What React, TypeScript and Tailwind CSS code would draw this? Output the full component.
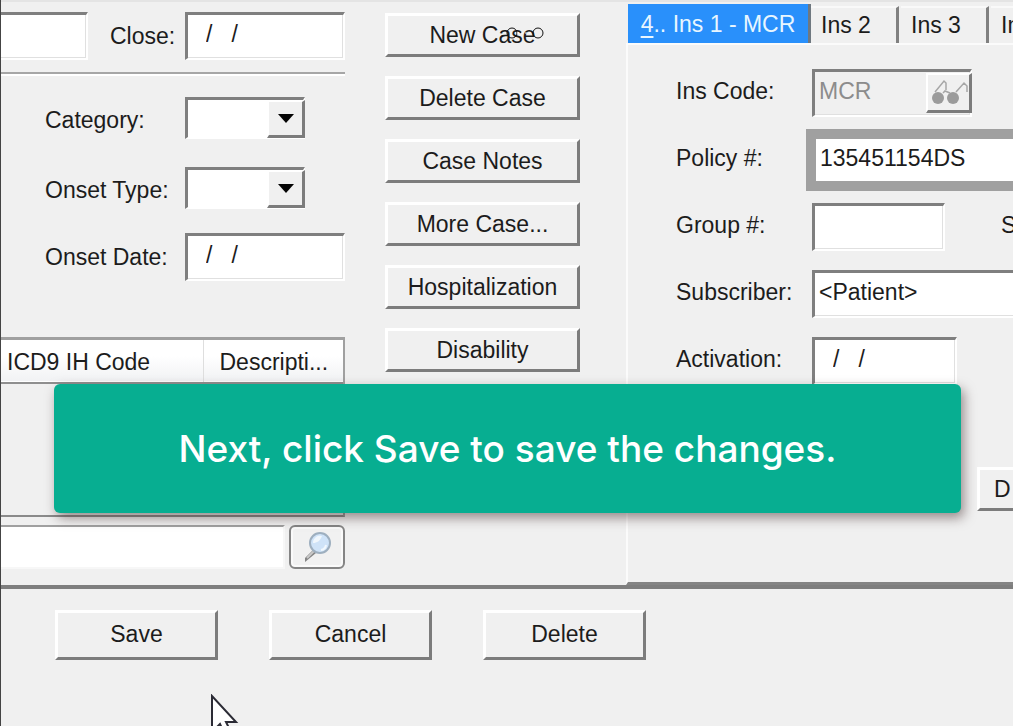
import React from "react";
import clsx from "clsx";

const FIELD =
  "h-12 min-w-0 border-t-3 border-r-2 border-b-2 border-t-[#7f7f7f] border-l-[#7f7f7f] border-r-white border-b-white pb-1 shadow-[inset_-1px_-1px_0_#e0e0e0] outline-none";

const RAISED =
  "border-t-3 border-l-3 border-r-3 border-b-3 border-t-white border-l-white border-r-[#7c7c7c] border-b-[#7c7c7c] bg-[#f0f0f0]";

const caseActions = [
  "New Case",
  "Delete Case",
  "Case Notes",
  "More Case...",
  "Hospitalization",
  "Disability",
];

const otherTabs = ["Ins 2", "Ins 3", "Ins 4"];

function PushButton({ children, className }: { children: React.ReactNode; className?: string }) {
  return (
    <button type="button" className={clsx(RAISED, "shrink-0", className)}>
      {children}
    </button>
  );
}

function ComboBox({ id }: { id: string }) {
  return (
    <div className="relative w-[120px]">
      <select
        id={id}
        className="block h-[42px] w-full appearance-none border-t-3 border-r-2 border-b-2 border-l-3 border-t-[#7f7f7f] border-r-white border-b-white border-l-[#7f7f7f] bg-white outline-none"
      >
        <option value=""></option>
      </select>
      <span className="pointer-events-none absolute top-[3px] right-0 flex h-[38px] w-[38px] items-center justify-center border-t-2 border-r-3 border-b-3 border-l-2 border-t-white border-r-[#7c7c7c] border-b-[#7c7c7c] border-l-white bg-[#f0f0f0]">
        <svg width="16" height="9" viewBox="0 0 16 9">
          <path d="M0 0h16L8 9z" fill="#050505" />
        </svg>
      </span>
    </div>
  );
}

function GlassesIcon() {
  return (
    <svg width="38" height="30" viewBox="0 0 38 30" fill="none">
      <circle cx="8" cy="20" r="6" fill="#9b9b9b" />
      <circle cx="23" cy="20" r="6" fill="#9b9b9b" />
      <path
        d="M5 14 14 3l2 2v7M13 15l2-2 5 2M26 14 34 5l3 3v6"
        stroke="#a6a6a6"
        strokeWidth="1.5"
      />
    </svg>
  );
}

function MagnifierIcon() {
  return (
    <svg width="28" height="32" viewBox="0 0 28 32" fill="none">
      <path d="M2 31v-4l8-8 3 3z" fill="#858585" />
      <path d="m4 27 7-7" stroke="#c9c9c9" strokeWidth="2" />
      <circle cx="17" cy="12" r="10" fill="#cfe3f8" stroke="#9eafbf" strokeWidth="2" />
      <path d="M10 12a7 7 0 0 1 9-7c-2 5-5 7-9 7z" fill="#f0f7fd" />
      <path d="M23 14a6 6 0 0 1-5 5" stroke="#f2f8fd" strokeWidth="2" />
    </svg>
  );
}

function CasePanel() {
  return (
    <section className="flex w-[344px] shrink-0 flex-col pt-3">
      <div className="flex items-center">
        <input aria-label="Open" className={clsx(FIELD, "w-[87px] bg-white")} />
        <label htmlFor="close" className="w-[97px] pl-[22px]">
          Close:
        </label>
        <input
          id="close"
          defaultValue="/   /"
          className={clsx(FIELD, "w-40 border-l-3 bg-white pl-[18px]")}
        />
      </div>

      <hr className="mt-3 h-1 border-t-2 border-b-2 border-t-[#a6a6a6] border-b-white" />

      <div className="mt-[21px] grid grid-cols-[140px_1fr] items-center gap-y-7 pl-11">
        <label htmlFor="category" className="pt-1">
          Category:
        </label>
        <ComboBox id="category" />
        <label htmlFor="onset-type" className="pt-1">
          Onset Type:
        </label>
        <ComboBox id="onset-type" />
      </div>
      <div className="mt-6 grid grid-cols-[140px_1fr] items-center pl-11">
        <label htmlFor="onset-date">Onset Date:</label>
        <input
          id="onset-date"
          defaultValue="/   /"
          className={clsx(FIELD, "w-full border-l-3 bg-white pl-[18px]")}
        />
      </div>

      <div className="mt-14 h-[180px] border-t-3 border-r-2 border-b-2 border-t-[#a0a0a0] border-r-[#a0a0a0] border-b-[#8a8a8a]">
        <table className="w-full table-fixed border-collapse text-left">
          <thead>
            <tr className="h-[43px] border-b-2 border-[#8f8f8f] bg-linear-to-b from-white from-40% to-[#f1f2f4]">
              <th className="w-[202px] border-r border-[#dedede] pt-0.5 pl-1.5 font-normal">
                ICD9 IH Code
              </th>
              <th className="pt-0.5 pl-4 font-normal">Descripti...</th>
            </tr>
          </thead>
        </table>
      </div>

      <div className="mt-2 mb-4 flex gap-1">
        <input
          aria-label="Search codes"
          className="h-11 min-w-0 flex-1 border-t-2 border-r-2 border-b-2 border-t-[#a0a0a0] border-r-[#f7f7f7] border-b-[#f7f7f7] bg-white outline-none"
        />
        <button
          type="button"
          aria-label="Search"
          className="flex h-11 w-14 items-center justify-center rounded-md border-2 border-[#858585] bg-[#f1f1f1] shadow-[inset_0_0_0_2px_#fafafa]"
        >
          <MagnifierIcon />
        </button>
      </div>
    </section>
  );
}

function InsurancePanel() {
  return (
    <section className="mt-1 ml-[46px] flex min-w-0 flex-1 flex-col overflow-hidden">
      <div role="tablist" className="flex h-[39px] shrink-0 pl-0.5">
        <button
          type="button"
          role="tab"
          aria-selected="true"
          className="w-[183px] shrink-0 border-r-3 border-[#6f7880] bg-[#2990fb] text-[#e8f6ff]"
        >
          <span className="underline underline-offset-4">4</span>.. Ins 1 - MCR
        </button>
        {otherTabs.map((tab) => (
          <button
            key={tab}
            type="button"
            role="tab"
            aria-selected="false"
            className="mt-0.5 mr-0.5 w-[88px] shrink-0 border-t-2 border-r-3 border-t-[#f9f9f9] border-r-[#808080] pb-0.5 pl-2.5 text-left"
          >
            {tab}
          </button>
        ))}
      </div>

      <div className="flex flex-1 flex-col border-t-2 border-b-3 border-l-2 border-t-[#fbfbfb] border-b-[#848484] border-l-[#fbfbfb] pt-6 pl-12">
        <div className="grid grid-cols-[136px_1fr] items-center gap-y-[19px]">
          <label htmlFor="ins-code" className="pb-1">
            Ins Code:
          </label>
          <div className="relative w-40">
            <input
              id="ins-code"
              defaultValue="MCR"
              disabled
              className={clsx(FIELD, "w-full border-l-3 bg-[#f0f0f0] pl-1 text-[#8c8c8c]")}
            />
            <button
              type="button"
              aria-label="Find insurance"
              className="absolute top-1 right-0 flex h-10 w-[46px] items-center justify-center border-t-2 border-r-3 border-b-3 border-l-2 border-t-white border-r-[#7c7c7c] border-b-[#7c7c7c] border-l-white bg-[#f0f0f0]"
            >
              <GlassesIcon />
            </button>
          </div>

          <label htmlFor="policy" className="pb-1">
            Policy #:
          </label>
          <div className="flex h-12 items-center pl-1">
            <input
              id="policy"
              defaultValue="135451154DS"
              className="h-[42px] w-full bg-white pb-1 pl-1 outline-10 outline-[#a0a0a0]"
            />
          </div>

          <label htmlFor="group" className="pb-1">
            Group #:
          </label>
          <div className="flex items-center overflow-hidden">
            <input id="group" className={clsx(FIELD, "w-[133px] shrink-0 border-l-3 bg-white pl-1")} />
            <span className="ml-14 shrink-0 pb-1">S</span>
          </div>

          <label htmlFor="subscriber" className="pb-1">
            Subscriber:
          </label>
          <div className="overflow-hidden">
            <input
              id="subscriber"
              defaultValue="<Patient>"
              className={clsx(FIELD, "w-[120%] border-l-3 bg-white pl-1")}
            />
          </div>

          <label htmlFor="activation" className="pb-1">
            Activation:
          </label>
          <input
            id="activation"
            defaultValue="/   /"
            className={clsx(FIELD, "w-[145px] border-l-3 bg-white pl-[18px]")}
          />
        </div>

        <div className="mt-[82px] mb-[71px] flex justify-end overflow-hidden">
          <div className="w-9 overflow-hidden">
            <PushButton className="h-11 w-[120px] pl-3.5 text-left">D</PushButton>
          </div>
        </div>
      </div>
    </section>
  );
}

export default function App() {
  return (
    <div className="relative min-h-screen w-full overflow-hidden border-l border-[#444] bg-[#f0f0f0] font-['Liberation_Sans',Arial,sans-serif] text-[23px] leading-7 text-[#1c1c1c]">
      <main className="flex border-b-4 border-[#7e7e7e] shadow-[inset_0_2px_0_#e4e4e4]">
        <CasePanel />

        <div className="ml-10 flex w-[195px] shrink-0 flex-col gap-[19px] pt-[13px]">
          {caseActions.map((action) => (
            <PushButton key={action} className="h-11">
              {action}
            </PushButton>
          ))}
        </div>

        <InsurancePanel />
      </main>

      <footer className="flex gap-[51px] pt-[21px] pb-16 pl-[54px]">
        {["Save", "Cancel", "Delete"].map((label) => (
          <PushButton key={label} className="h-[50px] w-[163px] pb-0.5">
            {label}
          </PushButton>
        ))}
      </footer>

      {/* click trail left over the New Case button */}
      <svg
        className="pointer-events-none absolute top-[26px] left-[504px]"
        width="40"
        height="14"
        viewBox="0 0 40 14"
        fill="none"
        stroke="#111"
      >
        <circle cx="7" cy="7" r="5" />
        <circle cx="33" cy="7" r="5" />
        <path d="M12 7h16" strokeDasharray="2 2" stroke="#fff" />
      </svg>

      <div
        role="status"
        className="absolute top-96 right-[52px] left-[53px] flex h-[129px] items-center justify-center rounded-md bg-[#07ae91] font-[Inter,sans-serif] text-[37px] font-medium text-white shadow-[3px_5px_12px_rgba(60,40,40,0.5)]"
      >
        Next, click Save to save the changes.
      </div>

      <svg
        className="pointer-events-none absolute top-[694px] left-[209px]"
        width="30"
        height="44"
        viewBox="0 0 30 44"
      >
        <path
          d="M2 2v36l8-8 6 13 6-3-6-12h10z"
          fill="#fff"
          stroke="#2b2b35"
          strokeWidth="2"
        />
      </svg>
    </div>
  );
}
